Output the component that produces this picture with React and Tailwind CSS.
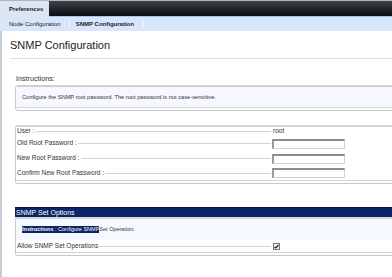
export default function App() {
  const Leader = () => <div className="flex-1 h-px bg-[#d4d4d4] ml-[1px]" />;
  const Input = () => (
    <div className="w-[73px] h-[10px] bg-white border border-[#d2d2d2] border-t-2 border-l-2 border-t-[#8c8c8c] border-l-[#9a9a9a]" />
  );
  return (
    <div className="w-[392px] h-[277px] overflow-hidden bg-white flex flex-col font-['Liberation_Sans',Arial,sans-serif] text-[#333]">
      <div className="flex h-[17px] shrink-0 bg-[#b4b4b4] pt-[1px]">
        <div className="w-[49px] bg-[#dbe6f5] rounded-tr-[2px] flex items-center pl-[9px] text-[6px] font-bold text-[#1e1e1e] leading-none">
          Preferences
        </div>
        <div className="flex-1 bg-gradient-to-b from-[#3d424a] via-[#22262c] to-[#0c1014] border-b border-[#aac3e8]" />
      </div>
      <div className="h-[14px] shrink-0 bg-[#d8e6fb] flex items-center pl-[9px] text-[6px] text-[#222] leading-none">
        <span>Node Configuration</span>
        <span className="w-px h-[6px] bg-[#f6f8fc] ml-[8px] mr-[6px]" />
        <span className="font-bold">SNMP Configuration</span>
        <span className="w-px h-[6px] bg-[#f6f8fc] ml-[9px]" />
      </div>
      <div className="flex flex-1 min-h-0">
        <div className="w-[2px] bg-[#c6ccd6] shrink-0" />
        <div className="flex-1 flex flex-col min-w-0">
          <div className="ml-[8px] mt-[8px] pb-[6px] border-b border-[#dcdcdc] text-[11px] leading-[13px] text-[#222]">
            SNMP Configuration
          </div>
          <div className="ml-[13px] -mr-[10px] flex flex-col">
            <div className="mt-[16px] pl-[1px] text-[7.2px] leading-[8px] text-[#333]">Instructions:</div>
            <div className="mt-[2px] border border-[#c9c9c9] border-t-2 border-t-[#cfcfcf] rounded-[3px] pb-[2px]">
              <div className="h-[21px] bg-[#f5f8fe] border-b border-[#d4d4d4] flex items-center pl-[6px] text-[5.7px] text-[#333]">
                Configure the SNMP root password. The root password is not case-sensitive.
              </div>
            </div>
            <div className="mt-[14px] border border-[#c9c9c9] border-t-2 border-t-[#d6d6d6] rounded-[3px] pb-[2px]">
              <div className="border-b border-[#d4d4d4] pl-[1px] text-[6.5px] leading-none text-[#333]">
                <div className="flex items-center h-[9px]">
                  <div className="w-[254px] flex items-center">
                    <span>User :</span>
                    <Leader />
                  </div>
                  <span className="ml-[2px] text-[#333]">root</span>
                </div>
                <div className="flex items-center h-[15px]">
                  <div className="w-[254px] flex items-center">
                    <span>Old Root Password :</span>
                    <Leader />
                  </div>
                  <div className="ml-[1px]"><Input /></div>
                </div>
                <div className="flex items-center h-[15px]">
                  <div className="w-[254px] flex items-center">
                    <span>New Root Password :</span>
                    <Leader />
                  </div>
                  <div className="ml-[1px]"><Input /></div>
                </div>
                <div className="flex items-center h-[14px]">
                  <div className="w-[254px] flex items-center">
                    <span>Confirm New Root Password :</span>
                    <Leader />
                  </div>
                  <div className="ml-[1px]"><Input /></div>
                </div>
              </div>
            </div>
            <div className="mt-[23px] h-[10px] bg-[#0b2466] border-t border-[#06163f] text-white text-[7px] leading-[9px] pl-[1px]">
              SNMP Set Options
            </div>
            <div className="border border-[#c9c9c9] border-t-2 border-t-[#d6d6d6] rounded-b-[3px] rounded-tl-[2px] pb-[2px]">
              <div className="border-b border-[#d4d4d4]">
                <div className="h-[21px] bg-[#f5f8fe] flex items-center pl-[6px] text-[5.5px] leading-[7px]">
                  <span className="bg-[#0b2466] text-white">
                    <span className="font-bold">Instructions</span> : Configure SNMP
                  </span>
                  <span className="text-[#333]">Set Operation.</span>
                </div>
                <div className="h-[12px] flex items-center pl-[1px] text-[6.5px] leading-none text-[#333]">
                  <div className="w-[254px] flex items-center">
                    <span>Allow SNMP Set Operations</span>
                    <Leader />
                  </div>
                  <div className="ml-[2px] w-[7px] h-[7px] border border-[#7a7a7a] bg-[#f2f2f2] flex items-center justify-center">
                    <svg width="5" height="5" viewBox="0 0 5 5">
                      <path d="M0.5 2.8 L1.8 4 L4.5 1" stroke="#222" strokeWidth="1.2" fill="none" />
                    </svg>
                  </div>
                </div>
              </div>
            </div>
          </div>
        </div>
      </div>
    </div>
  );
}
